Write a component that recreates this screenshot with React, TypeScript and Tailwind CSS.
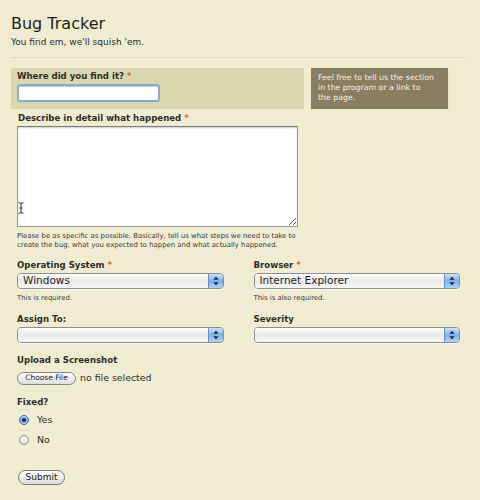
import type { ReactNode } from "react";

// Aqua-ish form controls for the bug tracker page

function Req() {
    return <span className="text-[#e2663e]"> *</span>;
}

function Label({ children, required }: { children: ReactNode; required?: boolean }) {
    return (
        <div className="text-[8.6px] font-bold leading-[11px] text-[#2e2e2a]">
            {children}
            {required && <Req />}
        </div>
    );
}

function Hint({ children }: { children: ReactNode }) {
    return <p className="mt-[5px] text-[6.9px] leading-[8px] text-[#3a3a34]">{children}</p>;
}

function AquaSelect({ value }: { value?: string }) {
    return (
        <div className="mt-[2px] flex h-[16px] w-full overflow-hidden rounded-[4px] border border-[#8d8d8d] shadow-[0_1px_0_rgba(255,255,255,0.7)]">
            <div className="flex flex-1 items-center bg-gradient-to-b from-[#ffffff] via-[#e9e9e9] to-[#f8f8f8] pl-[5px] text-[10.5px] text-[#1e1e1e]">
                {value}
            </div>
            <div className="flex w-[15px] items-center justify-center border-l border-[#6b8ec2] bg-gradient-to-b from-[#cfe2f8] via-[#7dafec] to-[#b3d4f6]">
                <svg width="6" height="10" viewBox="0 0 6 10">
                    <path d="M3 0.5 L5.6 3.8 L0.4 3.8 Z" fill="#1f2a3a" />
                    <path d="M3 9.5 L5.6 6.2 L0.4 6.2 Z" fill="#1f2a3a" />
                </svg>
            </div>
        </div>
    );
}

function Radio({ checked, label }: { checked?: boolean; label: string }) {
    return (
        <div className="flex h-[10px] items-center">
            <span
                className={
                    checked
                        ? "ml-[2px] flex h-[10px] w-[10px] items-center justify-center rounded-full border border-[#4d73a6] bg-gradient-to-b from-[#c3dcf8] via-[#6ea2e4] to-[#a9cdf4]"
                        : "ml-[2px] flex h-[10px] w-[10px] items-center justify-center rounded-full border border-[#8a8a8a] bg-gradient-to-b from-[#ffffff] to-[#dcdcdc]"
                }
            >
                {checked && <span className="h-[4px] w-[4px] rounded-full bg-[#1a2638]" />}
            </span>
            <span className="ml-[8px] text-[9.5px] text-[#2e2e2a]">{label}</span>
        </div>
    );
}

export default function App() {
    return (
        <div className="min-h-[500px] w-[480px] bg-[#efecd2] px-[11px] font-['DejaVu_Sans',sans-serif] text-[#2e2e2a]">
            {/* Header */}
            <h1 className="pt-[14px] text-[16px] leading-[19px] text-[#1d1d1b]">Bug Tracker</h1>
            <p className="mt-[4px] text-[9px] leading-[10px]">You find em, we'll squish 'em.</p>
            <div className="mt-[10px] w-[455px] border-t border-[#dcd9bd]" />

            {/* Location row */}
            <div className="mt-[10px] flex items-start gap-[7px]">
                <div className="h-[41px] w-[293px] bg-[#dad7b0] px-[6px] pt-[3px]">
                    <Label required>Where did you find it?</Label>
                    <div className="mt-[2px] h-[18px] w-[143px] rounded-[3px] border-2 border-[#85abd9] bg-white shadow-[inset_0_1px_1px_rgba(0,0,0,0.25)]" />
                </div>
                <div className="h-[41px] w-[137px] bg-[#8a7e62] pl-[7px] pt-[5px] text-[7.8px] leading-[10px] text-[#f4f1e4] shadow-[0_0_0_1px_#e9e5cc]">
                    Feel free to tell us the section
                    <br />
                    in the program or a link to
                    <br />
                    the page.
                </div>
            </div>

            <div className="ml-[6px]">
                {/* Description */}
                <div className="mt-[4px] pl-[1px]">
                    <Label required>Describe in detail what happened</Label>
                </div>
                <div className="relative mt-[2px] w-[281px]">
                    <textarea className="block h-[101px] w-[281px] resize border border-[#9a9a9a] border-t-[#7c7c7c] bg-white shadow-[inset_0_1px_2px_rgba(0,0,0,0.2)] outline-none" />
                    <svg className="absolute left-[1px] top-[76px]" width="6" height="12" viewBox="0 0 6 12">
                        <path d="M0.5 0.8 H2 Q3 0.8 3 2 V10 Q3 11.2 4 11.2 H5.5 M0.5 11.2 H2 Q3 11.2 3 10 M3 2 Q3 0.8 4 0.8 H5.5 M1.5 6 H4.5" stroke="#222" strokeWidth="0.9" fill="none" />
                    </svg>
                </div>
                <p className="mt-[5px] text-[6.9px] leading-[8.5px] text-[#3a3a34]">
                    Please be as specific as possible. Basically, tell us what steps we need to take to
                    <br />
                    create the bug, what you expected to happen and what actually happened.
                </p>

                {/* Selects */}
                <div className="mt-[11px] grid w-[443px] grid-cols-2 gap-x-[30px]">
                    <div>
                        <Label required>Operating System</Label>
                        <AquaSelect value="Windows" />
                        <Hint>This is required.</Hint>
                    </div>
                    <div>
                        <Label required>Browser</Label>
                        <AquaSelect value="Internet Explorer" />
                        <Hint>This is also required.</Hint>
                    </div>
                    <div className="mt-[12px]">
                        <Label>Assign To:</Label>
                        <AquaSelect />
                    </div>
                    <div className="mt-[12px]">
                        <Label>Severity</Label>
                        <AquaSelect />
                    </div>
                </div>

                {/* Upload */}
                <div className="mt-[12px]">
                    <Label>Upload a Screenshot</Label>
                    <div className="mt-[5px] flex items-center">
                        <button className="flex h-[13px] w-[59px] items-center justify-center rounded-full border border-[#858585] bg-gradient-to-b from-[#ffffff] to-[#dedede] text-[7.5px] text-[#222]">
                            Choose File
                        </button>
                        <span className="ml-[4px] text-[9.4px] text-[#2e2e2a]">no file selected</span>
                    </div>
                </div>

                {/* Fixed */}
                <div className="mt-[12px]">
                    <Label>Fixed?</Label>
                    <div className="mt-[7px] flex flex-col gap-[10px]">
                        <Radio checked label="Yes" />
                        <Radio label="No" />
                    </div>
                </div>

                <button className="mt-[25px] ml-[1px] flex h-[15px] w-[47px] items-center justify-center rounded-full border border-[#767676] bg-gradient-to-b from-[#ffffff] to-[#dcdcdc] text-[9px] text-[#222]">
                    Submit
                </button>
            </div>
        </div>
    );
}
